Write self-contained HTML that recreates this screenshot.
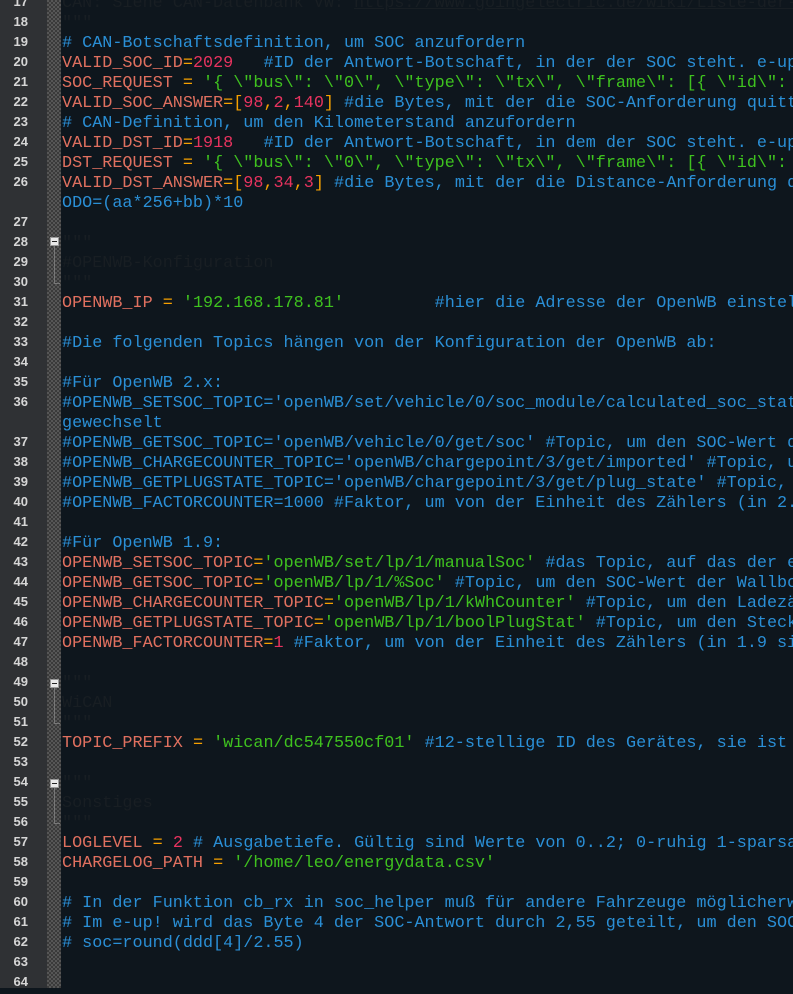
<!DOCTYPE html>
<html><head><meta charset="utf-8"><style>
html,body{margin:0;padding:0;width:793px;height:988px;overflow:hidden;background:#0e161d}
#g{position:absolute;left:0;top:0;width:47px;height:988px;background:#2f3134}
#c{position:absolute;left:47px;top:0;width:14px;height:988px;background:repeating-conic-gradient(#3a3a3a 0 25%,#565656 0 50%) 0 0/4px 4px}
.r{position:absolute;left:0;width:793px;height:20px;line-height:20px;overflow:hidden}
.n{position:absolute;left:0;width:28px;text-align:right;font:bold 13px "Liberation Sans",sans-serif;color:#d6d6d6}
.t{position:absolute;left:62px;white-space:pre;font:16.8px "Liberation Mono",monospace;color:#2a8fd6}
.i{color:#e0705f}.o{color:#f5a000}.s{color:#3fc21f}.m{color:#e8335f}.d{color:#181e23}.u{text-decoration:underline}
.fm{position:absolute;left:50px;width:9px;height:9px;background:#e8e8e8;box-sizing:border-box;border:1px solid #999}
.fm:after{content:"";position:absolute;left:1px;top:3px;width:5px;height:1px;background:#222}
.fl{position:absolute;left:54px;width:1px;background:#777}
.ft{position:absolute;left:54px;width:6px;height:1px;background:#777}
</style></head><body>
<div id="g"></div><div id="c"></div>
<div class="fl" style="top:246px;height:38px"></div><div class="ft" style="top:283px"></div>
<div class="fl" style="top:688px;height:36px"></div><div class="ft" style="top:723px"></div>
<div class="fl" style="top:788px;height:36px"></div><div class="ft" style="top:823px"></div>
<div class="fm" style="top:237px"></div>
<div class="fm" style="top:679px"></div>
<div class="fm" style="top:779px"></div>

<div class="r" style="top:-6px"><span class="n">17</span><span class="t d">CAN: Siehe CAN-Datenbank VW: <span class="u">https://www.goingelectric.de/wiki/Liste-der-OBD2-Codes/</span></span></div>
<div class="r" style="top:14px"><span class="n">18</span><span class="t d">"""</span></div>
<div class="r" style="top:34px"><span class="n">19</span><span class="t"># CAN-Botschaftsdefinition, um SOC anzufordern</span></div>
<div class="r" style="top:54px"><span class="n">20</span><span class="t"><span class="i">VALID_SOC_ID</span><span class="o">=</span><span class="m">2029</span>   #ID der Antwort-Botschaft, in der der SOC steht. e-up</span></div>
<div class="r" style="top:74px"><span class="n">21</span><span class="t"><span class="i">SOC_REQUEST</span> <span class="o">=</span> <span class="s">'{ \"bus\": \"0\", \"type\": \"tx\", \"frame\": [{ \"id\": </span></span></div>
<div class="r" style="top:94px"><span class="n">22</span><span class="t"><span class="i">VALID_SOC_ANSWER</span><span class="o">=[</span><span class="m">98</span><span class="o">,</span><span class="m">2</span><span class="o">,</span><span class="m">140</span><span class="o">]</span> #die Bytes, mit der die SOC-Anforderung quittiert</span></div>
<div class="r" style="top:114px"><span class="n">23</span><span class="t"># CAN-Definition, um den Kilometerstand anzufordern</span></div>
<div class="r" style="top:134px"><span class="n">24</span><span class="t"><span class="i">VALID_DST_ID</span><span class="o">=</span><span class="m">1918</span>   #ID der Antwort-Botschaft, in dem der SOC steht. e-up</span></div>
<div class="r" style="top:154px"><span class="n">25</span><span class="t"><span class="i">DST_REQUEST</span> <span class="o">=</span> <span class="s">'{ \"bus\": \"0\", \"type\": \"tx\", \"frame\": [{ \"id\": </span></span></div>
<div class="r" style="top:174px"><span class="n">26</span><span class="t"><span class="i">VALID_DST_ANSWER</span><span class="o">=[</span><span class="m">98</span><span class="o">,</span><span class="m">34</span><span class="o">,</span><span class="m">3</span><span class="o">]</span> #die Bytes, mit der die Distance-Anforderung quitt</span></div>
<div class="r" style="top:194px"><span class="t">ODO=(aa*256+bb)*10</span></div>
<div class="r" style="top:214px"><span class="n">27</span></div>
<div class="r" style="top:234px"><span class="n">28</span><span class="t d">"""</span></div>
<div class="r" style="top:254px"><span class="n">29</span><span class="t d">#OPENWB-Konfiguration</span></div>
<div class="r" style="top:274px"><span class="n">30</span><span class="t d">"""</span></div>
<div class="r" style="top:294px"><span class="n">31</span><span class="t"><span class="i">OPENWB_IP</span> <span class="o">=</span> <span class="s">'192.168.178.81'</span>         #hier die Adresse der OpenWB einstellen</span></div>
<div class="r" style="top:314px"><span class="n">32</span></div>
<div class="r" style="top:334px"><span class="n">33</span><span class="t">#Die folgenden Topics hängen von der Konfiguration der OpenWB ab:</span></div>
<div class="r" style="top:354px"><span class="n">34</span></div>
<div class="r" style="top:374px"><span class="n">35</span><span class="t">#Für OpenWB 2.x:</span></div>
<div class="r" style="top:394px"><span class="n">36</span><span class="t">#OPENWB_SETSOC_TOPIC='openWB/set/vehicle/0/soc_module/calculated_soc_state'</span></div>
<div class="r" style="top:414px"><span class="t">gewechselt</span></div>
<div class="r" style="top:434px"><span class="n">37</span><span class="t">#OPENWB_GETSOC_TOPIC='openWB/vehicle/0/get/soc' #Topic, um den SOC-Wert der</span></div>
<div class="r" style="top:454px"><span class="n">38</span><span class="t">#OPENWB_CHARGECOUNTER_TOPIC='openWB/chargepoint/3/get/imported' #Topic, um</span></div>
<div class="r" style="top:474px"><span class="n">39</span><span class="t">#OPENWB_GETPLUGSTATE_TOPIC='openWB/chargepoint/3/get/plug_state' #Topic, um</span></div>
<div class="r" style="top:494px"><span class="n">40</span><span class="t">#OPENWB_FACTORCOUNTER=1000 #Faktor, um von der Einheit des Zählers (in 2.x</span></div>
<div class="r" style="top:514px"><span class="n">41</span></div>
<div class="r" style="top:534px"><span class="n">42</span><span class="t">#Für OpenWB 1.9:</span></div>
<div class="r" style="top:554px"><span class="n">43</span><span class="t"><span class="i">OPENWB_SETSOC_TOPIC</span><span class="o">=</span><span class="s">'openWB/set/lp/1/manualSoc'</span> #das Topic, auf das der errechnete</span></div>
<div class="r" style="top:574px"><span class="n">44</span><span class="t"><span class="i">OPENWB_GETSOC_TOPIC</span><span class="o">=</span><span class="s">'openWB/lp/1/%Soc'</span> #Topic, um den SOC-Wert der Wallbox</span></div>
<div class="r" style="top:594px"><span class="n">45</span><span class="t"><span class="i">OPENWB_CHARGECOUNTER_TOPIC</span><span class="o">=</span><span class="s">'openWB/lp/1/kWhCounter'</span> #Topic, um den Ladezähler</span></div>
<div class="r" style="top:614px"><span class="n">46</span><span class="t"><span class="i">OPENWB_GETPLUGSTATE_TOPIC</span><span class="o">=</span><span class="s">'openWB/lp/1/boolPlugStat'</span> #Topic, um den Stecker</span></div>
<div class="r" style="top:634px"><span class="n">47</span><span class="t"><span class="i">OPENWB_FACTORCOUNTER</span><span class="o">=</span><span class="m">1</span> #Faktor, um von der Einheit des Zählers (in 1.9 sind</span></div>
<div class="r" style="top:654px"><span class="n">48</span></div>
<div class="r" style="top:674px"><span class="n">49</span><span class="t d">"""</span></div>
<div class="r" style="top:694px"><span class="n">50</span><span class="t d">WiCAN</span></div>
<div class="r" style="top:714px"><span class="n">51</span><span class="t d">"""</span></div>
<div class="r" style="top:734px"><span class="n">52</span><span class="t"><span class="i">TOPIC_PREFIX</span> <span class="o">=</span> <span class="s">'wican/dc547550cf01'</span> #12-stellige ID des Gerätes, sie ist auf</span></div>
<div class="r" style="top:754px"><span class="n">53</span></div>
<div class="r" style="top:774px"><span class="n">54</span><span class="t d">"""</span></div>
<div class="r" style="top:794px"><span class="n">55</span><span class="t d">Sonstiges</span></div>
<div class="r" style="top:814px"><span class="n">56</span><span class="t d">"""</span></div>
<div class="r" style="top:834px"><span class="n">57</span><span class="t"><span class="i">LOGLEVEL</span> <span class="o">=</span> <span class="m">2</span> # Ausgabetiefe. Gültig sind Werte von 0..2; 0-ruhig 1-sparsam</span></div>
<div class="r" style="top:854px"><span class="n">58</span><span class="t"><span class="i">CHARGELOG_PATH</span> <span class="o">=</span> <span class="s">'/home/leo/energydata.csv'</span></span></div>
<div class="r" style="top:874px"><span class="n">59</span></div>
<div class="r" style="top:894px"><span class="n">60</span><span class="t"># In der Funktion cb_rx in soc_helper muß für andere Fahrzeuge möglicherweise</span></div>
<div class="r" style="top:914px"><span class="n">61</span><span class="t"># Im e-up! wird das Byte 4 der SOC-Antwort durch 2,55 geteilt, um den SOC</span></div>
<div class="r" style="top:934px"><span class="n">62</span><span class="t"># soc=round(ddd[4]/2.55)</span></div>
<div class="r" style="top:954px"><span class="n">63</span></div>
<div class="r" style="top:974px"><span class="n">64</span></div>
</body></html>
